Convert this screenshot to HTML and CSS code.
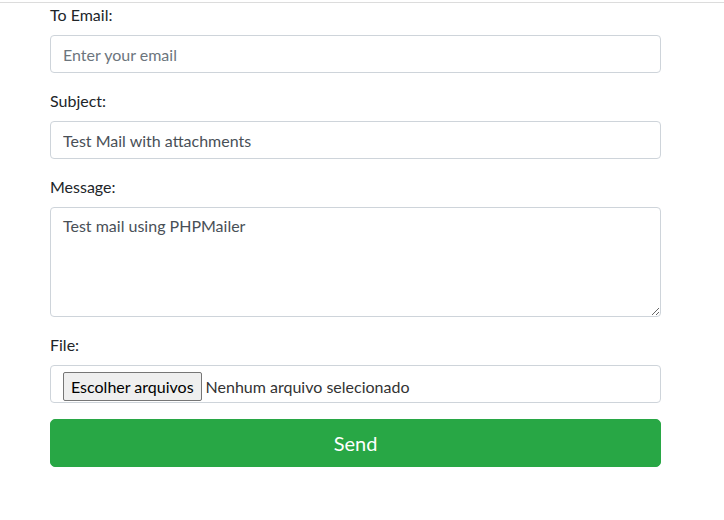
FILE: index.html
```html
<!DOCTYPE html>
<html lang="pt">
<head>
<meta charset="utf-8">
<title>Send Mail</title>
<link rel="stylesheet" href="styles.css">
</head>
<body>
<div class="topline"></div>
<form class="mail-form">
  <div class="form-group">
    <label class="label">To Email:</label>
    <input class="form-control" type="email" placeholder="Enter your email">
  </div>
  <div class="form-group">
    <label class="label">Subject:</label>
    <input class="form-control" type="text" value="Test Mail with attachments">
  </div>
  <div class="form-group">
    <label class="label">Message:</label>
    <textarea class="form-control textarea" rows="4">Test mail using PHPMailer</textarea>
  </div>
  <div class="form-group">
    <label class="label">File:</label>
    <div class="form-control file-box">
      <span class="file-btn">Escolher arquivos</span>
      <span class="file-name">Nenhum arquivo selecionado</span>
    </div>
  </div>
  <button type="button" class="btn-send">Send</button>
</form>
</body>
</html>
```

FILE: styles.css
```css
* { box-sizing: border-box; }
html, body { margin: 0; padding: 0; background: #fff; }
body {
  font-family: Lato, "Noto Sans", sans-serif;
  font-size: 16px;
  line-height: 24px;
  color: #212529;
}
.topline {
  height: 4px;
  border-bottom: 1px solid #dcdcdc;
  margin-top: -1px;
}
.mail-form {
  width: 611px;
  margin-left: 50px;
}
.form-group {
  display: flex;
  flex-direction: column;
  margin-bottom: 16px;
}
.label {
  display: block;
  margin-bottom: 8px;
}
.form-control {
  display: block;
  width: 100%;
  height: 38px;
  padding: 6px 12px;
  font-family: inherit;
  font-size: 16px;
  line-height: 24px;
  color: #495057;
  background: #fff;
  border: 1px solid #ced4da;
  border-radius: 4px;
  outline: none;
}
.form-control::placeholder { color: #6c757d; opacity: 1; }
.textarea {
  height: 110px;
  resize: vertical;
}
.file-box {
  display: flex;
  align-items: flex-start;
  padding: 6px 12px 0 12px;
  overflow: hidden;
  color: #212529;
}
.file-btn {
  display: inline-block;
  height: 29px;
  padding: 2px 7px;
  line-height: 24px;
  background: #efefef;
  border: 1px solid #767676;
  border-radius: 2px;
  color: #000;
  white-space: nowrap;
}
.file-name {
  margin-left: 4px;
  line-height: 29px;
  color: #333;
  white-space: nowrap;
}
.btn-send {
  display: block;
  width: 100%;
  height: 48px;
  font-family: inherit;
  font-size: 20px;
  line-height: 30px;
  color: #fff;
  background: #28a745;
  border: 1px solid #28a745;
  border-radius: 5px;
  cursor: pointer;
}
```
